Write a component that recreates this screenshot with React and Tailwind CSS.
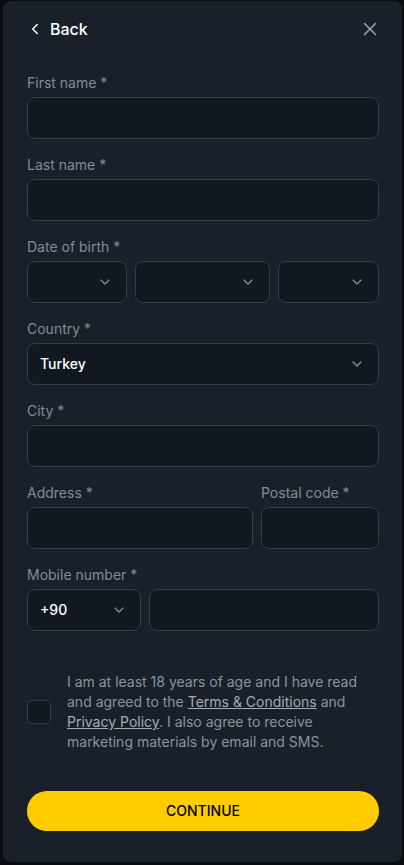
import { ChevronLeft, ChevronDown, X } from "lucide-react";

const font = { fontFamily: "Inter, 'Noto Sans', sans-serif" };

const fieldClass =
  "h-[42px] w-full rounded-lg border border-[#343d48] bg-[#111820] px-3 text-sm text-white outline-none";

function Label({ children }) {
  return <div className="mb-1 text-sm leading-5 text-[#828c98]">{children}</div>;
}

function Select({ value, className = "" }) {
  return (
    <div
      className={`flex h-[42px] items-center justify-between rounded-lg border border-[#343d48] bg-[#111820] pl-3 pr-[13px] ${className}`}
    >
      <span className="text-sm font-medium text-white">{value}</span>
      <ChevronDown size={16} strokeWidth={1.75} className="text-[#8a939e]" />
    </div>
  );
}

function Field({ label, children, className = "" }) {
  return (
    <div className={className}>
      <Label>{label}</Label>
      {children}
    </div>
  );
}

export default function App() {
  return (
    <div className="min-h-[865px] bg-[#0a0c10] pl-[3px] pr-[2px] pt-px pb-[4px]" style={font}>
      <div className="flex min-h-[860px] flex-col rounded-lg bg-[#19202a] pl-6 pr-[23px]">
        <div className="flex h-[54px] items-center justify-between pt-[2px]">
          <button className="flex items-center gap-[6px] text-white">
            <ChevronLeft size={18} strokeWidth={2} className="-ml-[1px]" />
            <span className="text-base font-medium">Back</span>
          </button>
          <X size={22} strokeWidth={1.75} className="-mr-[2px] text-[#98a0aa]" />
        </div>

        <div className="mt-[18px] flex flex-col gap-4">
          <Field label="First name *">
            <input className={fieldClass} />
          </Field>
          <Field label="Last name *">
            <input className={fieldClass} />
          </Field>
          <Field label="Date of birth *">
            <div className="flex gap-2">
              <Select value="" className="w-[100px]" />
              <Select value="" className="flex-1" />
              <Select value="" className="w-[101px]" />
            </div>
          </Field>
          <Field label="Country *">
            <Select value="Turkey" />
          </Field>
          <Field label="City *">
            <input className={fieldClass} />
          </Field>
          <div className="flex gap-2">
            <Field label="Address *" className="flex-1">
              <input className={fieldClass} />
            </Field>
            <Field label="Postal code *" className="w-[118px]">
              <input className={fieldClass} />
            </Field>
          </div>
          <Field label="Mobile number *">
            <div className="flex gap-2">
              <Select value="+90" className="w-[114px]" />
              <input className={`${fieldClass} flex-1`} />
            </div>
          </Field>
        </div>

        <label className="mt-[41px] flex items-center gap-4">
          <span className="h-6 w-6 shrink-0 rounded border border-[#343d48] bg-[#111820]" />
          <span className="text-sm leading-5 text-[#8a949f]">
            I am at least 18 years of age and I have read and agreed to the{" "}
            <a className="text-[#a3acb7] underline">Terms &amp; Conditions</a> and{" "}
            <a className="text-[#a3acb7] underline">Privacy Policy</a>. I also agree to receive
            marketing materials by email and SMS.
          </span>
        </label>

        <button className="mt-[39px] mb-[31px] h-10 w-full rounded-full bg-[#ffcc00] text-sm font-medium text-black">
          CONTINUE
        </button>
      </div>
    </div>
  );
}
